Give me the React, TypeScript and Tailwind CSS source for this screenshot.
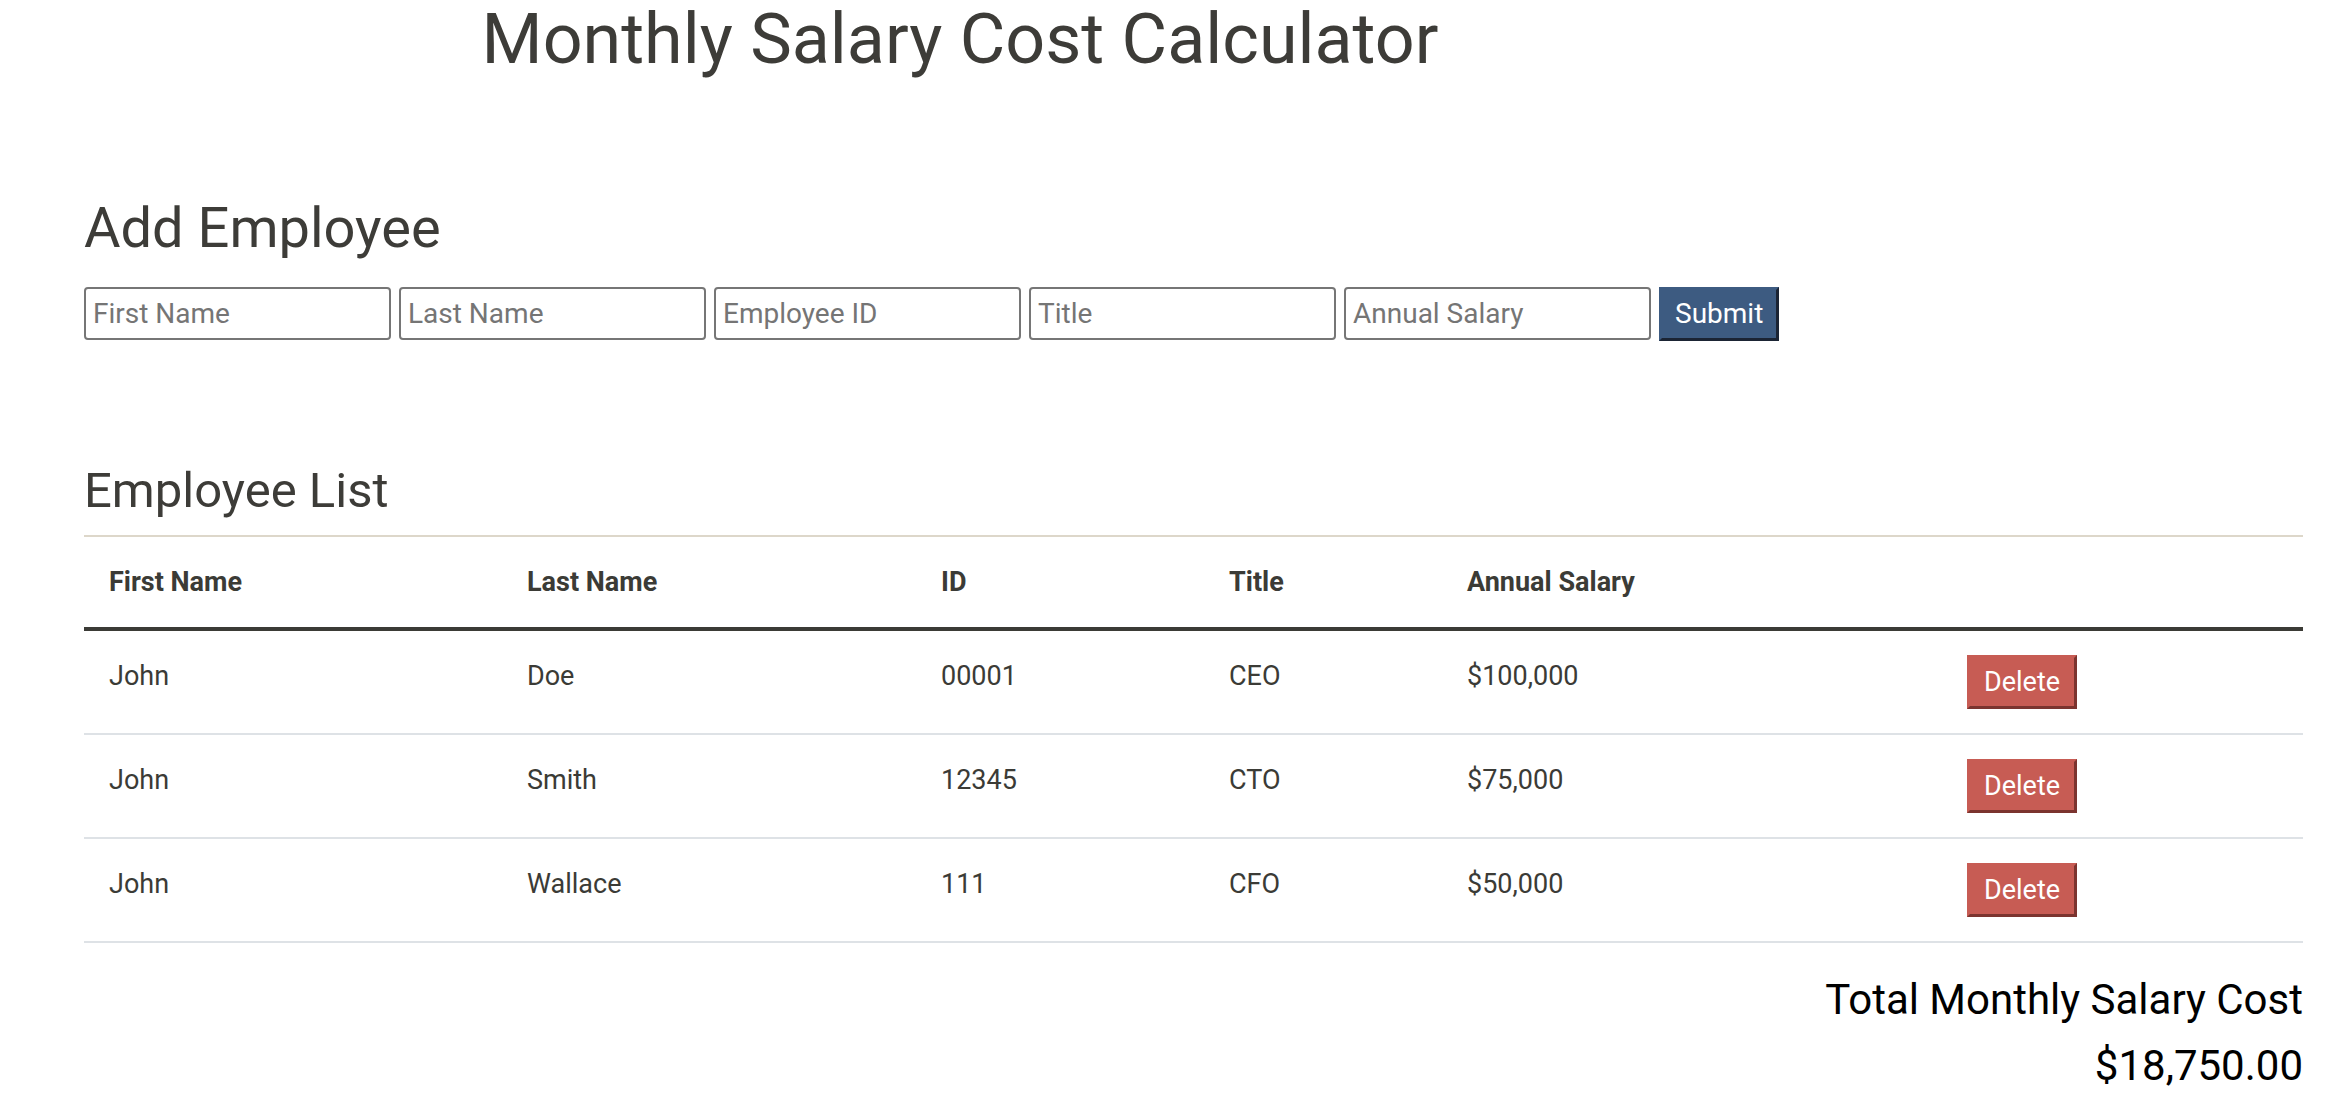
import React from 'react';

type Employee = {
  first: string;
  last: string;
  id: string;
  title: string;
  salary: string;
};

const employees: Employee[] = [
  { first: 'John', last: 'Doe', id: '00001', title: 'CEO', salary: '$100,000' },
  { first: 'John', last: 'Smith', id: '12345', title: 'CTO', salary: '$75,000' },
  { first: 'John', last: 'Wallace', id: '111', title: 'CFO', salary: '$50,000' },
];

const fields = ['First Name', 'Last Name', 'Employee ID', 'Title', 'Annual Salary'];

const cols = 'grid grid-cols-[418px_414px_288px_238px_500px_1fr]';

export default function App() {
  return (
    <div className="min-h-screen bg-white pl-[84px] pr-[29px] font-['Roboto','Liberation_Sans',sans-serif] text-[#3b3b36]">
      <h1 className="w-[1752px] text-center text-[70px] leading-[78px] font-normal text-[#3d3c38]">
        Monthly Salary Cost Calculator
      </h1>

      <h2 className="mt-[117px] text-[56px] leading-[66px] font-normal text-[#3d3c38]">
        Add Employee
      </h2>

      <form className="mt-[26px] flex items-start gap-[8px]" onSubmit={(e) => e.preventDefault()}>
        {fields.map((f) => (
          <input
            key={f}
            placeholder={f}
            className="h-[53px] w-[307px] rounded-[4px] border-2 border-[#767676] bg-white pl-[7px] text-[28px] text-[#3b3b36] placeholder:text-[#757575] outline-none"
          />
        ))}
        <button
          type="submit"
          className="flex h-[54px] items-center justify-center border-[3px] border-t-[#3d5b81] border-l-[#3d5b81] border-r-[#1b2434] border-b-[#1b2434] bg-[#3d5b81] px-[13px] text-[28px] text-white"
        >
          Submit
        </button>
      </form>

      <h3 className="mt-[121px] text-[49px] leading-[58px] font-normal text-[#3d3c38]">
        Employee List
      </h3>

      <div className="mt-[15px] border-t-2 border-[#ddd7ca]">
        <div className={`${cols} h-[94px] border-b-4 border-[#3b3b36] text-[27px] leading-[40px] font-bold`}>
          <div className="pl-[25px] pt-[25px]">First Name</div>
          <div className="pl-[25px] pt-[25px]">Last Name</div>
          <div className="pl-[25px] pt-[25px]">ID</div>
          <div className="pl-[25px] pt-[25px]">Title</div>
          <div className="pl-[25px] pt-[25px]">Annual Salary</div>
          <div />
        </div>
        {employees.map((e, i) => (
          <div key={i} className={`${cols} h-[104px] border-b-2 border-[#dee2e6] text-[27px] leading-[40px]`}>
            <div className="pl-[25px] pt-[25px]">{e.first}</div>
            <div className="pl-[25px] pt-[25px]">{e.last}</div>
            <div className="pl-[25px] pt-[25px]">{e.id}</div>
            <div className="pl-[25px] pt-[25px]">{e.title}</div>
            <div className="pl-[25px] pt-[25px]">{e.salary}</div>
            <div className="pl-[25px] pt-[24px]">
              <button className="flex h-[54px] items-center justify-center border-[3px] border-t-[#c75c54] border-l-[#c75c54] border-r-[#7b342f] border-b-[#7b342f] bg-[#c75c54] px-[14px] text-[27px] text-white">
                Delete
              </button>
            </div>
          </div>
        ))}
      </div>

      <div className="mt-[33px] text-right text-[42px] leading-[48px] text-black">Total Monthly Salary Cost</div>
      <div className="mt-[18px] text-right text-[42px] leading-[48px] text-black">$18,750.00</div>
    </div>
  );
}
